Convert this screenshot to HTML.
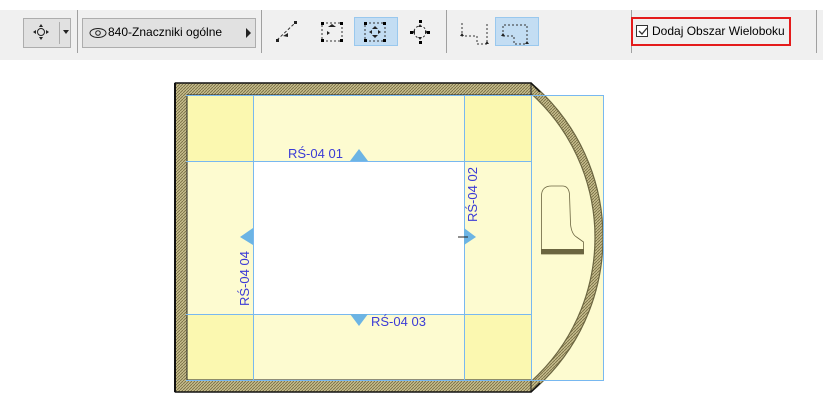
<!DOCTYPE html>
<html style="width:823px;height:416px;overflow:hidden"><head><style>
body{margin:0;width:823px;height:416px;background:#fff;position:relative;overflow:hidden;font-family:"Liberation Sans",sans-serif}
.tb{position:absolute;left:0;top:10px;width:823px;height:50px;background:#f0f0f0}
.sep{position:absolute;top:10px;width:1px;height:43px;background:#a0a0a0}
.btn{position:absolute;box-sizing:border-box;border:1px solid #adadad;background:#e1e1e1}
.sel{position:absolute;box-sizing:border-box;border:1px solid #99c8ee;background:#c3ddf3}
.hatch{fill:url(#h)}
svg{display:block}
</style></head><body>
<div class="tb"></div>
<div class="btn" style="left:23px;top:18px;width:48px;height:30px"></div>
<div style="position:absolute;left:59px;top:22px;width:1px;height:22px;background:#adadad"></div>
<svg style="position:absolute;left:23px;top:18px" width="48" height="30"><circle cx="18" cy="14" r="3.5" fill="none" stroke="#222"/><path d="M18 6l-2 3h4zM18 22l-2-3h4zM10 14l3-2v4zM26 14l-3-2v4zM40 12h6l-3 4z" fill="#222"/></svg>
<div class="btn" style="left:82px;top:18px;width:174px;height:30px"></div>
<svg style="position:absolute;left:88px;top:24px" width="20" height="18"><ellipse cx="10" cy="9" rx="8" ry="4.5" fill="none" stroke="#222"/><circle cx="10" cy="9" r="2.3" fill="none" stroke="#222"/></svg>
<div style="position:absolute;left:108px;top:25px;font-size:12px;color:#000">840-Znaczniki ogólne</div>
<svg style="position:absolute;left:246px;top:28px" width="6" height="10"><path d="M0 0l5 5-5 5z" fill="#222"/></svg>
<div class="sep" style="left:77px"></div>
<div class="sep" style="left:261px"></div>
<div class="sel" style="left:354px;top:17px;width:44px;height:29px"></div>
<div class="sel" style="left:495px;top:17px;width:44px;height:29px"></div>
<svg style="position:absolute;left:270px;top:15px" width="360" height="35">
<path d="M7 25L25 8" stroke="#333" stroke-dasharray="3 2"/><rect x="6" y="24" width="3" height="3" fill="#222"/><rect x="24" y="6" width="3" height="3" fill="#222"/><path d="M13 21l5-3v4z" fill="#222"/>
<rect x="52" y="8" width="20" height="18" fill="none" stroke="#333" stroke-dasharray="2 2"/><path d="M58 12l4-3 4 3zM60 18l-3 2v-4z" fill="#222"/><rect x="51" y="7" width="3" height="3"/><rect x="70" y="7" width="3" height="3"/><rect x="51" y="24" width="3" height="3"/><rect x="70" y="24" width="3" height="3"/>
<rect x="95" y="8" width="20" height="18" fill="none" stroke="#333" stroke-dasharray="2 2"/><rect x="94" y="7" width="3" height="3"/><rect x="113" y="7" width="3" height="3"/><rect x="94" y="24" width="3" height="3"/><rect x="113" y="24" width="3" height="3"/><path d="M105 11l-3 3h6zM105 23l-3-3h6zM99 17l3-2v4zM111 17l-3-2v4z" fill="#222"/>
<circle cx="150" cy="17" r="6" fill="none" stroke="#333" stroke-dasharray="2 2"/><path d="M150 9l-2 3h4zM150 25l-2-3h4zM142 17l3-2v4zM158 17l-3-2v4z" fill="#222"/><rect x="149" y="5" width="3" height="3"/><rect x="149" y="26" width="3" height="3"/><rect x="140" y="16" width="3" height="3"/><rect x="157" y="16" width="3" height="3"/>
<path d="M192 8v13h15v8h10V8" fill="none" stroke="#333" stroke-dasharray="2 2"/><path d="M190 21l2-3 2 3zM215 29l2-3 2 3z" fill="#222"/>
<path d="M233 21V10h24v19h-13v-8z" fill="none" stroke="#333" stroke-dasharray="2 2"/><path d="M231 21l2-3 2 3zM255 29l2-3 2 3z" fill="#222"/>
</svg>
<div class="sep" style="left:446px"></div>
<div class="sep" style="left:631px"></div>
<div class="sep" style="left:816px"></div>
<div style="position:absolute;left:631px;top:17px;width:160px;height:29px;box-sizing:border-box;border:2px solid #e41b1b"></div>
<div style="position:absolute;left:636px;top:25px;width:12px;height:12px;box-sizing:border-box;border:1px solid #333;background:#fff"></div>
<svg style="position:absolute;left:637px;top:26px" width="11" height="11"><path d="M2 5l3 3 5-6" fill="none" stroke="#333" stroke-width="1.3"/></svg>
<div style="position:absolute;left:652px;top:24px;font-size:12px;color:#000">Dodaj Obszar Wieloboku</div>

<svg style="position:absolute;left:0;top:0" width="823" height="416">
<defs><pattern id="h" width="3" height="3" patternUnits="userSpaceOnUse"><rect width="3" height="3" fill="#c5bc8c"/><path d="M0 3L3 0" stroke="#7a7045" stroke-width=".9"/></pattern>
<clipPath id="c"><rect x="531" y="0" width="200" height="416"/></clipPath></defs>
<rect x="186" y="95" width="345" height="285" fill="#fdfbd0"/>
<rect x="531" y="95" width="72" height="285" fill="#fdfbd0"/>
<rect x="186" y="95" width="67" height="66" fill="#fbf8b0"/><rect x="464" y="95" width="67" height="66" fill="#fbf8b0"/>
<rect x="186" y="314" width="67" height="66" fill="#fbf8b0"/><rect x="464" y="314" width="67" height="66" fill="#fbf8b0"/>
<rect x="253" y="161" width="211" height="153" fill="#fff"/>
<g clip-path="url(#c)"><circle cx="401" cy="237.5" r="198" fill="none" stroke="url(#h)" stroke-width="8"/>
<circle cx="401" cy="237.5" r="202" fill="none" stroke="#6b6540" stroke-width="1.2"/><circle cx="401" cy="237.5" r="194" fill="none" stroke="#6b6540" stroke-width="1.2"/></g>
<path d="M175 83H531V95H187V380H531V392H175z" class="hatch" stroke="#222" stroke-width="1"/>
<path d="M175 83V392" stroke="#111" stroke-width="2"/><path d="M175 83H531l9 9" stroke="#111" stroke-width="1.5" fill="none"/><path d="M175 392H531l9-9" stroke="#111" stroke-width="1.5" fill="none"/>
<g stroke="#78b8f0" fill="none"><path d="M186 95.5H531M186 161.5H531M186 314.5H531M186 380.5H531M253.5 95V380M464.5 95V380M531.5 95V380"/><rect x="531.5" y="95.5" width="72" height="285"/></g>
<path d="M541.5 254V196q0-10 10-10h11q6 0 7 8l1 30q1 10 6 13l7 5v12z" fill="#fdfbd0" stroke="#6b6540" stroke-width=".8"/>
<rect x="541" y="249" width="43" height="5" fill="#6b6540"/>
<g fill="#6cb4e4"><path d="M350 161l9-12 9 12z"/><path d="M350 314l9 12 9-12z"/><path d="M253 228l-13 9 13 8z"/><path d="M464 228l12 9-12 8z"/></g>
<path d="M458 237h10" stroke="#222"/>
<g fill="#3b3bd6" font-size="13" font-family="Liberation Sans"><text x="288" y="158">RŚ-04 01</text><text x="371" y="326">RŚ-04 03</text>
<text transform="translate(477 222) rotate(-90)">RŚ-04 02</text><text transform="translate(249 306) rotate(-90)">RŚ-04 04</text></g>
</svg>
</body></html>
